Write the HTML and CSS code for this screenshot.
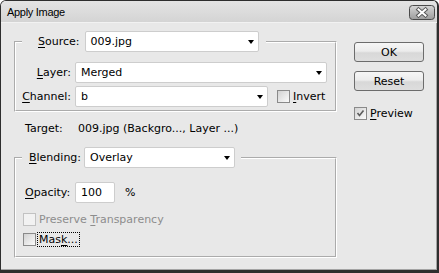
FILE: index.html
```html
<!DOCTYPE html>
<html lang="en">
<head>
    <meta charset="UTF-8">
    <title>Apply Image</title>
    <link rel="stylesheet" href="styles.css">
</head>
<body>
    <div class="window">
        <div class="titlebar">
            <span class="title">Apply Image</span>
            <span class="close">
                <svg width="26" height="15" viewBox="0 0 26 15">
                    <defs>
                        <linearGradient id="cg" x1="0" y1="0" x2="0" y2="1">
                            <stop offset="0" stop-color="#d6d6d6"/>
                            <stop offset="1" stop-color="#9c9c9c"/>
                        </linearGradient>
                    </defs>
                    <rect x="0.5" y="0.5" width="25" height="14" rx="3" fill="url(#cg)" stroke="#4a4a4a"/>
                    <path d="M9.5 4.5 L16.5 10.5 M16.5 4.5 L9.5 10.5" stroke="#5a5a5a" stroke-width="4" stroke-linecap="square"/>
                    <path d="M9.5 4.5 L16.5 10.5 M16.5 4.5 L9.5 10.5" stroke="#fff" stroke-width="2" stroke-linecap="square"/>
                </svg>
            </span>
        </div>
        <div class="content">
            <div class="main">
                <fieldset class="group source">
                    <legend>
                        <div class="legend-row">
                            <span class="label"><u>S</u>ource:</span>
                            <div class="combo source-combo">009.jpg</div>
                        </div>
                    </legend>
                    <div class="row">
                        <span class="row-label"><u>L</u>ayer:</span>
                        <div class="combo layer-combo">Merged</div>
                    </div>
                    <div class="row gap">
                        <span class="row-label"><u>C</u>hannel:</span>
                        <div class="combo channel-combo">b</div>
                        <label class="check invert"><span class="box"></span><span><u>I</u>nvert</span></label>
                    </div>
                </fieldset>

                <div class="target">
                    <span class="target-label">Target:</span>
                    <span>009.jpg (Backgro..., Layer ...)</span>
                </div>

                <fieldset class="group blend">
                    <legend>
                        <div class="legend-row">
                            <span class="label"><u>B</u>lending:</span>
                            <div class="combo blend-combo">Overlay</div>
                        </div>
                    </legend>
                    <div class="row opacity">
                        <span class="opacity-label"><u>O</u>pacity:</span>
                        <div class="field">100</div>
                        <span class="percent">%</span>
                    </div>
                    <label class="check line disabled"><span class="box"></span><span>Preserve <u>T</u>ransparency</span></label>
                    <label class="check line"><span class="box"></span><span class="focus">Mas<u>k</u>...</span></label>
                </fieldset>
            </div>

            <div class="side">
                <button class="btn">OK</button>
                <button class="btn reset">Reset</button>
                <label class="check preview">
                    <span class="box checked">
                        <svg width="11" height="11" viewBox="0 0 11 11">
                            <path d="M2.5 5 L4.5 7.5 L8.5 2.5" fill="none" stroke="#5c5c5c" stroke-width="1.6"/>
                        </svg>
                    </span><span><u>P</u>review</span>
                </label>
            </div>
        </div>
    </div>
</body>
</html>
```

FILE: styles.css
```css
body {
    margin: 0;
    background: #fff;
    font-family: "DejaVu Sans", sans-serif;
    font-size: 11px;
    color: #000;
}
u {
    text-decoration-thickness: 1px;
    text-underline-offset: 2px;
}
.window {
    width: 439px;
    height: 273px;
    box-sizing: border-box;
    background: #e8e8e8;
    border: 1px solid #2e2e2e;
    border-right-width: 2px;
    border-bottom-width: 3px;
    border-radius: 6px 6px 0 0;
    box-shadow: inset -1px -1px 0 #a4a4a4;
    overflow: hidden;
}
.titlebar {
    height: 21px;
    display: flex;
    align-items: center;
    justify-content: space-between;
    padding: 0 2px 0 6px;
    background: linear-gradient(#e4e4e4, #d4d4d4);
    border-bottom: 1px solid #f2f2f2;
}
.title {
    font-family: "Liberation Sans", sans-serif;
    font-size: 11px;
    letter-spacing: -0.3px;
    padding-top: 1px;
}
.close {
    display: flex;
    margin-top: 1px;
}
.content {
    display: flex;
}
.main {
    padding: 8px 0 0 13px;
    width: 323px;
}
.group {
    margin: 0;
    width: 323px;
    min-width: 0;
    box-sizing: border-box;
    border: 2px groove #fff;
    padding: 10px 0 3px 6px;
}
.group legend {
    padding: 0 7px 0 16px;
}
.legend-row {
    display: flex;
    align-items: center;
}
.label {
    margin-right: 5px;
}
.blend legend {
    padding: 0 6px 0 7px;
}
.blend .label {
    margin-right: 3px;
}
.combo {
    height: 21px;
    box-sizing: border-box;
    border: 1px solid #cdcdcd;
    border-radius: 2px;
    background: #fff;
    display: flex;
    align-items: center;
    padding-left: 5px;
}
.combo::after {
    content: "";
    margin-left: auto;
    margin-right: 4px;
    border-left: 3px solid transparent;
    border-right: 3px solid transparent;
    border-top: 4px solid #000;
}
.source-combo {
    width: 174px;
}
.layer-combo {
    width: 252px;
}
.channel-combo {
    width: 193px;
}
.blend-combo {
    width: 151px;
}
.row {
    display: flex;
    align-items: center;
    height: 21px;
}
.row.gap {
    margin-top: 3px;
}
.row-label {
    width: 49px;
    text-align: right;
    margin-right: 4px;
}
.target {
    height: 14px;
    line-height: 14px;
    margin: 10px 0 11px 11px;
    display: flex;
}
.target-label {
    width: 53px;
}
.blend {
    padding: 14px 0 7px 6px;
}
.opacity-label {
    margin-left: 3px;
    width: 50px;
}
.field {
    width: 40px;
    height: 21px;
    box-sizing: border-box;
    border: 1px solid #cdcdcd;
    border-radius: 2px;
    background: #fff;
    padding-left: 5px;
    line-height: 19px;
}
.percent {
    margin-left: 10px;
}
.opacity {
    margin-bottom: 6px;
}
.check {
    display: flex;
    align-items: center;
}
.check .box {
    width: 13px;
    height: 13px;
    box-sizing: border-box;
    border: 1px solid #8a8a8a;
    background: linear-gradient(135deg, #d2d2d2, #fbfbfb);
    margin-right: 3px;
    display: flex;
    align-items: center;
    justify-content: center;
}
.check.line {
    height: 20px;
    margin-left: 1px;
}
.check.disabled {
    color: #8d8d8d;
}
.check.disabled .box {
    border-color: #c2c2c2;
    background: #f2f2f2;
}
.invert {
    margin-left: 9px;
}
.focus {
    outline: 1px dotted #000;
    padding: 0 1px;
    margin-left: -1px;
}
.side {
    margin-left: 17px;
    padding-top: 19px;
    display: flex;
    flex-direction: column;
    align-items: flex-start;
}
.btn {
    width: 70px;
    height: 20px;
    padding: 0;
    font: inherit;
    color: #000;
    border: 1px solid #6c6c6c;
    border-radius: 3px;
    background: linear-gradient(#f6f6f6, #ececec 45%, #d8d8d8 55%, #dedede);
}
.reset {
    margin-top: 9px;
}
.preview {
    margin-top: 12px;
    height: 20px;
}
```
